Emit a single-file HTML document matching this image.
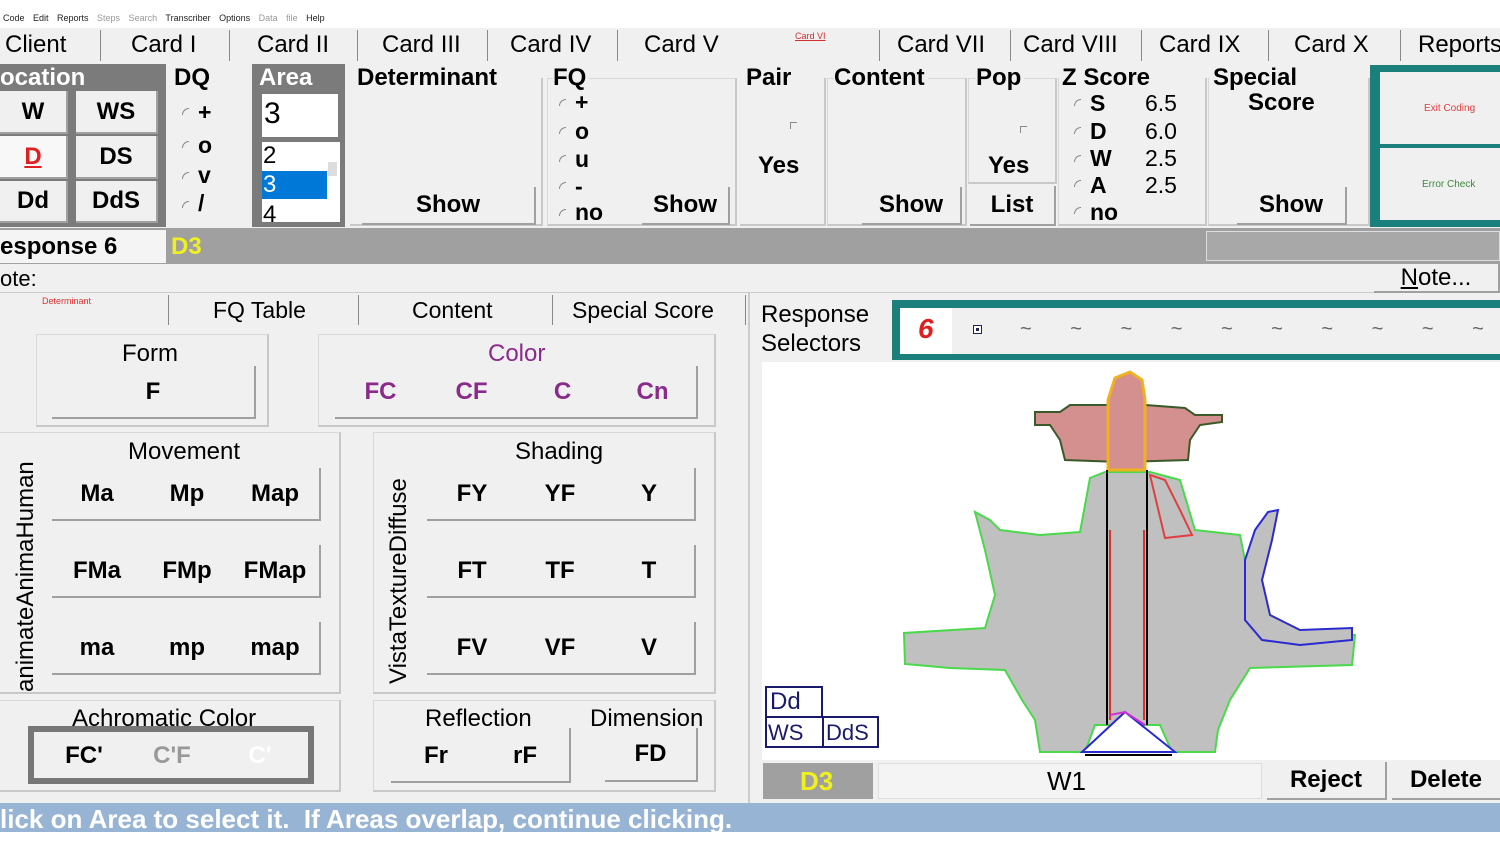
<!DOCTYPE html>
<html><head><meta charset="utf-8"><style>
*{box-sizing:border-box;margin:0;padding:0}
body{width:1500px;height:843px;background:#fff;position:relative;overflow:hidden;font-family:"Liberation Sans",Arial,sans-serif;color:#000}
.a{position:absolute}
.t{position:absolute;white-space:nowrap}
.b{font-weight:bold}
.tt{background:#f0f0f0;padding-right:3px;z-index:2}
.btn{position:absolute;background:#f0f0f0;border-right:2px solid #a0a0a0;border-bottom:2px solid #a0a0a0;display:flex;align-items:center;justify-content:center;font-weight:bold;font-size:24px}
.grp{position:absolute;border:1px solid #d8d8d8;border-right:2px solid #c8c8c8;border-bottom:2px solid #c8c8c8}
.cell{position:absolute;display:flex;align-items:center;justify-content:center;font-weight:bold;font-size:24px}
.rad{position:absolute;width:7px;height:7px;border-left:1px solid #888;border-top:1px solid #888;border-radius:7px 0 0 0}
.sep{position:absolute;width:2px;background:#888}
</style></head><body>
<div class="a" style="left:0;top:0;width:1500px;height:28px;background:#fff"></div>
<div class="t" style="left:3px;top:13px;font-size:9px;color:#222;word-spacing:6px">Code Edit Reports <span style="color:#999">Steps Search</span> Transcriber Options <span style="color:#999">Data&nbsp;file</span> Help</div>
<div class="a" style="left:0;top:28px;width:1500px;height:36px;background:#f0f0f0"></div>
<div class="t" style="left:5px;top:31px;font-size:24px">Client</div>
<div class="t" style="left:131px;top:31px;font-size:24px">Card I</div>
<div class="t" style="left:257px;top:31px;font-size:24px">Card II</div>
<div class="t" style="left:382px;top:31px;font-size:24px">Card III</div>
<div class="t" style="left:510px;top:31px;font-size:24px">Card IV</div>
<div class="t" style="left:644px;top:31px;font-size:24px">Card V</div>
<div class="t" style="left:795px;top:31px;font-size:9px;color:#d03030;text-decoration:underline">Card VI</div>
<div class="t" style="left:897px;top:31px;font-size:24px">Card VII</div>
<div class="t" style="left:1023px;top:31px;font-size:24px">Card VIII</div>
<div class="t" style="left:1159px;top:31px;font-size:24px">Card IX</div>
<div class="t" style="left:1294px;top:31px;font-size:24px">Card X</div>
<div class="t" style="left:1418px;top:31px;font-size:24px">Reports</div>
<div class="sep" style="left:100px;top:30px;height:31px;width:1px"></div>
<div class="sep" style="left:229px;top:30px;height:31px;width:1px"></div>
<div class="sep" style="left:357px;top:30px;height:31px;width:1px"></div>
<div class="sep" style="left:487px;top:30px;height:31px;width:1px"></div>
<div class="sep" style="left:617px;top:30px;height:31px;width:1px"></div>
<div class="sep" style="left:879px;top:30px;height:31px;width:1px"></div>
<div class="sep" style="left:1010px;top:30px;height:31px;width:1px"></div>
<div class="sep" style="left:1141px;top:30px;height:31px;width:1px"></div>
<div class="sep" style="left:1268px;top:30px;height:31px;width:1px"></div>
<div class="sep" style="left:1400px;top:30px;height:31px;width:1px"></div>
<div class="a" style="left:0;top:64px;width:1500px;height:166px;background:#f0f0f0"></div>
<div class="a" style="left:0;top:64px;width:166px;height:163px;background:#7b7b7b"></div>
<div class="t b" style="left:0;top:64px;font-size:24px;color:#fff">ocation</div>
<div class="btn" style="left:0;top:91px;width:68px;height:43px">W</div>
<div class="btn" style="left:76px;top:91px;width:82px;height:43px">WS</div>
<div class="btn" style="left:0;top:136px;width:68px;height:43px;background:#f8f8f8;color:#e02020;text-decoration:underline">D</div>
<div class="btn" style="left:76px;top:136px;width:82px;height:43px">DS</div>
<div class="btn" style="left:0;top:181px;width:68px;height:42px">Dd</div>
<div class="btn" style="left:76px;top:181px;width:82px;height:42px">DdS</div>
<div class="t b" style="left:174px;top:64px;font-size:24px">DQ</div>
<div class="rad" style="left:182px;top:108px"></div><div class="t b" style="left:198px;top:99px;font-size:23px">+</div>
<div class="rad" style="left:182px;top:141px"></div><div class="t b" style="left:198px;top:132px;font-size:23px">o</div>
<div class="rad" style="left:182px;top:172px"></div><div class="t b" style="left:198px;top:162px;font-size:23px">v</div>
<div class="rad" style="left:182px;top:201px"></div><div class="t b" style="left:198px;top:190px;font-size:23px">/</div>
<div class="a" style="left:252px;top:64px;width:93px;height:163px;background:#7b7b7b"></div>
<div class="t b" style="left:259px;top:64px;font-size:24px;color:#fff">Area</div>
<div class="a" style="left:262px;top:94px;width:76px;height:43px;background:#fff"></div>
<div class="t" style="left:264px;top:97px;font-size:30px">3</div>
<div class="a" style="left:262px;top:142px;width:78px;height:80px;background:#fff;overflow:hidden">
<div class="t" style="left:1px;top:0;font-size:24px">2</div>
<div class="a" style="left:0;top:29px;width:65px;height:28px;background:#0078d7"></div>
<div class="t" style="left:1px;top:29px;font-size:24px;color:#fff">3</div>
<div class="t" style="left:1px;top:59px;font-size:24px">4</div>
<div class="a" style="left:66px;top:20px;width:9px;height:14px;background:#ddd"></div>
</div>
<div class="grp" style="left:350px;top:78px;width:193px;height:148px;border-left:none;border-top:none"></div>
<div class="t b tt" style="left:357px;top:64px;font-size:24px">Determinant</div>
<div class="btn" style="left:362px;top:187px;width:174px;height:38px">Show</div>
<div class="grp" style="left:547px;top:78px;width:190px;height:148px"></div>
<div class="t b tt" style="left:553px;top:64px;font-size:24px">FQ</div>
<div class="rad" style="left:559px;top:99px"></div><div class="t b" style="left:575px;top:89px;font-size:23px">+</div>
<div class="rad" style="left:559px;top:127px"></div><div class="t b" style="left:575px;top:118px;font-size:23px">o</div>
<div class="rad" style="left:559px;top:155px"></div><div class="t b" style="left:575px;top:146px;font-size:23px">u</div>
<div class="rad" style="left:559px;top:182px"></div><div class="t b" style="left:575px;top:173px;font-size:23px">-</div>
<div class="rad" style="left:559px;top:209px"></div><div class="t b" style="left:575px;top:199px;font-size:23px">no</div>
<div class="btn" style="left:642px;top:187px;width:88px;height:38px">Show</div>
<div class="grp" style="left:740px;top:78px;width:86px;height:148px;border-left:none;border-top:none"></div>
<div class="t b tt" style="left:746px;top:64px;font-size:24px">Pair</div>
<div class="rad" style="left:790px;top:122px;border-radius:0"></div>
<div class="t b" style="left:758px;top:152px;font-size:24px">Yes</div>
<div class="grp" style="left:827px;top:78px;width:140px;height:148px"></div>
<div class="t b tt" style="left:834px;top:64px;font-size:24px">Content</div>
<div class="btn" style="left:862px;top:187px;width:100px;height:38px">Show</div>
<div class="grp" style="left:968px;top:78px;width:89px;height:106px"></div>
<div class="t b tt" style="left:976px;top:64px;font-size:24px">Pop</div>
<div class="rad" style="left:1020px;top:126px;border-radius:0"></div>
<div class="t b" style="left:988px;top:152px;font-size:24px">Yes</div>
<div class="btn" style="left:970px;top:186px;width:86px;height:40px">List</div>
<div class="grp" style="left:1058px;top:78px;width:149px;height:148px;border-top:none"></div>
<div class="t b tt" style="left:1062px;top:64px;font-size:24px">Z Score</div>
<div class="rad" style="left:1074px;top:99px"></div><div class="t b" style="left:1090px;top:90px;font-size:23px">S</div><div class="t" style="left:1145px;top:90px;font-size:23px">6.5</div>
<div class="rad" style="left:1074px;top:127px"></div><div class="t b" style="left:1090px;top:118px;font-size:23px">D</div><div class="t" style="left:1145px;top:118px;font-size:23px">6.0</div>
<div class="rad" style="left:1074px;top:155px"></div><div class="t b" style="left:1090px;top:145px;font-size:23px">W</div><div class="t" style="left:1145px;top:145px;font-size:23px">2.5</div>
<div class="rad" style="left:1074px;top:180px"></div><div class="t b" style="left:1090px;top:172px;font-size:23px">A</div><div class="t" style="left:1145px;top:172px;font-size:23px">2.5</div>
<div class="rad" style="left:1074px;top:207px"></div><div class="t b" style="left:1090px;top:199px;font-size:23px">no</div>
<div class="grp" style="left:1208px;top:78px;width:162px;height:148px;border-top:none"></div>
<div class="t b tt" style="left:1213px;top:64px;font-size:24px">Special</div>
<div class="t b" style="left:1248px;top:89px;font-size:24px">Score</div>
<div class="btn" style="left:1237px;top:187px;width:110px;height:38px">Show</div>
<div class="a" style="left:1370px;top:65px;width:140px;height:162px;background:#1b7f7b"></div>
<div class="a" style="left:1380px;top:72px;width:130px;height:72px;background:#f0f0f0"></div>
<div class="a" style="left:1380px;top:148px;width:130px;height:72px;background:#f0f0f0"></div>
<div class="t" style="left:1424px;top:103px;font-size:10px;color:#e04040">Exit Coding</div>
<div class="t" style="left:1422px;top:179px;font-size:10px;color:#3a8a3a">Error Check</div>
<div class="a" style="left:0;top:228px;width:1500px;height:36px;background:#a0a0a0"></div>
<div class="a" style="left:0;top:230px;width:166px;height:33px;background:#f4f4f4"></div>
<div class="t b" style="left:0;top:233px;font-size:24px">esponse 6</div>
<div class="t b" style="left:171px;top:233px;font-size:24px;color:#f0f020">D3</div>
<div class="a" style="left:1206px;top:231px;width:294px;height:30px;background:#a8a8a8;border:1px solid #ddd"></div>
<div class="a" style="left:0;top:264px;width:1500px;height:29px;background:#f0f0f0;border-bottom:1px solid #ccc"></div>
<div class="t" style="left:0;top:266px;font-size:22px">ote:</div>
<div class="btn" style="left:1374px;top:264px;width:126px;height:29px;font-weight:normal"><span style="text-decoration:underline">N</span>ote...</div>
<div class="a" style="left:0;top:293px;width:1500px;height:510px;background:#f0f0f0"></div>
<div class="t" style="left:42px;top:296px;font-size:9px;color:#e03030">Determinant</div>
<div class="sep" style="left:168px;top:295px;height:30px;width:1px"></div>
<div class="sep" style="left:358px;top:295px;height:30px;width:1px"></div>
<div class="sep" style="left:552px;top:295px;height:30px;width:1px"></div>
<div class="sep" style="left:745px;top:295px;height:30px;width:1px"></div>
<div class="t" style="left:213px;top:297px;font-size:23px">FQ Table</div>
<div class="t" style="left:412px;top:297px;font-size:23px">Content</div>
<div class="t" style="left:572px;top:297px;font-size:23px">Special Score</div>
<div class="a" style="left:748px;top:293px;width:2px;height:510px;background:#ccc"></div>
<div class="grp" style="left:36px;top:334px;width:233px;height:93px"></div>
<div class="t" style="left:122px;top:340px;font-size:24px">Form</div>
<div class="btn" style="left:52px;top:366px;width:204px;height:53px">F</div>
<div class="grp" style="left:318px;top:334px;width:398px;height:93px"></div>
<div class="t" style="left:488px;top:340px;font-size:24px;color:#8a2a8a">Color</div>
<div class="btn" style="left:335px;top:366px;width:363px;height:53px"></div>
<div class="cell" style="left:335px;top:366px;width:91px;height:51px;color:#8a2a8a">FC</div>
<div class="cell" style="left:426px;top:366px;width:91px;height:51px;color:#8a2a8a">CF</div>
<div class="cell" style="left:517px;top:366px;width:91px;height:51px;color:#8a2a8a">C</div>
<div class="cell" style="left:607px;top:366px;width:91px;height:51px;color:#8a2a8a">Cn</div>
<div class="grp" style="left:-2px;top:432px;width:343px;height:262px"></div>
<div class="t" style="left:128px;top:438px;font-size:24px">Movement</div>
<div class="t" style="left:12px;top:692px;font-size:24px;transform:rotate(-90deg);transform-origin:0 0">animateAnimaHuman</div>
<div class="btn" style="left:52px;top:468px;width:269px;height:53px"></div>
<div class="cell" style="left:52px;top:468px;width:90px;height:52px">Ma</div><div class="cell" style="left:142px;top:468px;width:90px;height:52px">Mp</div><div class="cell" style="left:230px;top:468px;width:90px;height:52px">Map</div>
<div class="btn" style="left:52px;top:545px;width:269px;height:53px"></div>
<div class="cell" style="left:52px;top:545px;width:90px;height:52px">FMa</div><div class="cell" style="left:142px;top:545px;width:90px;height:52px">FMp</div><div class="cell" style="left:230px;top:545px;width:90px;height:52px">FMap</div>
<div class="btn" style="left:52px;top:622px;width:269px;height:53px"></div>
<div class="cell" style="left:52px;top:622px;width:90px;height:52px">ma</div><div class="cell" style="left:142px;top:622px;width:90px;height:52px">mp</div><div class="cell" style="left:230px;top:622px;width:90px;height:52px">map</div>
<div class="grp" style="left:373px;top:432px;width:343px;height:262px"></div>
<div class="t" style="left:515px;top:438px;font-size:24px">Shading</div>
<div class="t" style="left:385px;top:684px;font-size:24px;transform:rotate(-90deg);transform-origin:0 0">VistaTextureDiffuse</div>
<div class="btn" style="left:427px;top:468px;width:269px;height:53px"></div>
<div class="cell" style="left:427px;top:468px;width:90px;height:52px">FY</div><div class="cell" style="left:515px;top:468px;width:90px;height:52px">YF</div><div class="cell" style="left:604px;top:468px;width:90px;height:52px">Y</div>
<div class="btn" style="left:427px;top:545px;width:269px;height:53px"></div>
<div class="cell" style="left:427px;top:545px;width:90px;height:52px">FT</div><div class="cell" style="left:515px;top:545px;width:90px;height:52px">TF</div><div class="cell" style="left:604px;top:545px;width:90px;height:52px">T</div>
<div class="btn" style="left:427px;top:622px;width:269px;height:53px"></div>
<div class="cell" style="left:427px;top:622px;width:90px;height:52px">FV</div><div class="cell" style="left:515px;top:622px;width:90px;height:52px">VF</div><div class="cell" style="left:604px;top:622px;width:90px;height:52px">V</div>
<div class="grp" style="left:-2px;top:700px;width:343px;height:92px"></div>
<div class="a" style="left:28px;top:726px;width:286px;height:58px;border:6px solid #777;background:#f0f0f0"></div>
<div class="t" style="left:72px;top:705px;font-size:24px">Achromatic Color</div>
<div class="cell" style="left:40px;top:730px;width:88px;height:52px">FC'</div>
<div class="cell" style="left:128px;top:730px;width:88px;height:52px;color:#999">C'F</div>
<div class="cell" style="left:216px;top:730px;width:88px;height:52px;color:#fff">C'</div>
<div class="grp" style="left:373px;top:700px;width:343px;height:92px"></div>
<div class="t" style="left:425px;top:705px;font-size:24px">Reflection</div>
<div class="t" style="left:590px;top:705px;font-size:24px">Dimension</div>
<div class="btn" style="left:391px;top:728px;width:180px;height:55px"></div>
<div class="cell" style="left:391px;top:730px;width:90px;height:52px">Fr</div><div class="cell" style="left:480px;top:730px;width:90px;height:52px">rF</div>
<div class="btn" style="left:605px;top:728px;width:93px;height:54px">FD</div>
<div class="t" style="left:761px;top:300px;font-size:24px;line-height:29px">Response<br>Selectors</div>
<div class="a" style="left:892px;top:300px;width:620px;height:60px;background:#1b7f7b"></div>
<div class="a" style="left:900px;top:308px;width:610px;height:46px;background:#f0f0f0"></div>
<div class="a" style="left:900px;top:308px;width:52px;height:46px;background:#fff"></div>
<div class="t b" style="left:918px;top:313px;font-size:28px;color:#e02020;font-style:italic">6</div>
<div class="a" style="left:973px;top:325px;width:9px;height:9px;border:1px solid #225;background:#fff"><div class="a" style="left:2px;top:2px;width:3px;height:3px;background:#225"></div></div>
<div class="t" style="left:1020px;top:318px;font-size:20px;color:#666;word-spacing:33px">~ ~ ~ ~ ~ ~ ~ ~ ~ ~</div>
<div class="a" style="left:762px;top:362px;width:738px;height:398px;background:#fff"></div>
<svg class="a" style="left:762px;top:362px" width="738" height="398" viewBox="762 362 738 398">
<path d="M1090 478 L1105 472 L1150 472 L1180 480 L1195 530 L1240 535 L1245 560 L1250 600 L1252 628 L1355 635 L1352 665 L1250 668 L1230 700 L1218 730 L1215 752 L1172 752 L1160 725 L1095 725 L1085 752 L1040 752 L1035 720 L1022 700 L1005 670 L950 668 L905 664 L904 633 L985 628 L995 595 L985 550 L975 512 L990 520 L1000 530 L1040 535 L1080 532 Z" fill="#c0c0c0" stroke="#4ad94a" stroke-width="2"/>
<path d="M1035 412 L1060 412 L1070 405 L1108 405 L1108 470 L1145 470 L1145 405 L1185 408 L1195 415 L1222 415 L1222 422 L1200 425 L1190 440 L1188 460 L1120 462 L1065 460 L1060 440 L1050 425 L1035 425 Z" fill="#d48f8f" stroke="#3a5a2a" stroke-width="2"/>
<path d="M1108 470 L1108 400 L1115 378 L1130 372 L1142 380 L1145 400 L1145 470 Z" fill="#d48f8f" stroke="#f0b020" stroke-width="3"/>
<path d="M1150 475 L1165 480 L1180 510 L1192 535 L1165 538 Z" fill="none" stroke="#e04040" stroke-width="2"/>
<path d="M1268 512 L1278 510 L1272 540 L1262 580 L1270 615 L1300 630 L1352 628 L1352 640 L1300 645 L1262 640 L1245 620 L1245 560 L1255 530 Z" fill="#c0c0c0" stroke="#2a2ad0" stroke-width="2"/>
<path d="M1082 752 L1125 712 L1175 752 Z" fill="#fff" stroke="#2a2ad0" stroke-width="2"/>
<path d="M1107 470 L1107 725 M1147 470 L1147 725 M1085 755 L1172 755" stroke="#000" stroke-width="2"/>
<path d="M1110 530 L1110 720 M1144 530 L1144 720" stroke="#e03030" stroke-width="2"/>
<path d="M1110 715 L1125 712 L1145 725" fill="none" stroke="#d030d0" stroke-width="2"/>
</svg>
<div class="a" style="left:765px;top:686px;width:58px;height:32px;border:2px solid #1a1a6a;background:#fff"></div>
<div class="t" style="left:770px;top:688px;font-size:24px;color:#1a1a6a">Dd</div>
<div class="a" style="left:765px;top:716px;width:59px;height:32px;border:2px solid #1a1a6a;background:#fff"></div>
<div class="t" style="left:768px;top:720px;font-size:22px;color:#1a1a6a">WS</div>
<div class="a" style="left:822px;top:716px;width:57px;height:32px;border:2px solid #1a1a6a;background:#fff"></div>
<div class="t" style="left:826px;top:720px;font-size:22px;color:#1a1a6a">DdS</div>
<div class="a" style="left:763px;top:763px;width:110px;height:36px;background:#a0a0a0"></div>
<div class="t b" style="left:800px;top:766px;font-size:26px;color:#f0f020">D3</div>
<div class="a" style="left:878px;top:763px;width:384px;height:36px;background:#f4f4f4;border:1px solid #ddd"></div>
<div class="t" style="left:1047px;top:766px;font-size:26px">W1</div>
<div class="btn" style="left:1267px;top:762px;width:120px;height:38px">Reject</div>
<div class="btn" style="left:1392px;top:762px;width:110px;height:38px">Delete</div>
<div class="a" style="left:0;top:803px;width:1500px;height:29px;background:#98b4d4"></div>
<div class="t b" style="left:0;top:804px;font-size:26px;color:#fff">lick on Area to select it.&nbsp; If Areas overlap, continue clicking.</div>
</body></html>
